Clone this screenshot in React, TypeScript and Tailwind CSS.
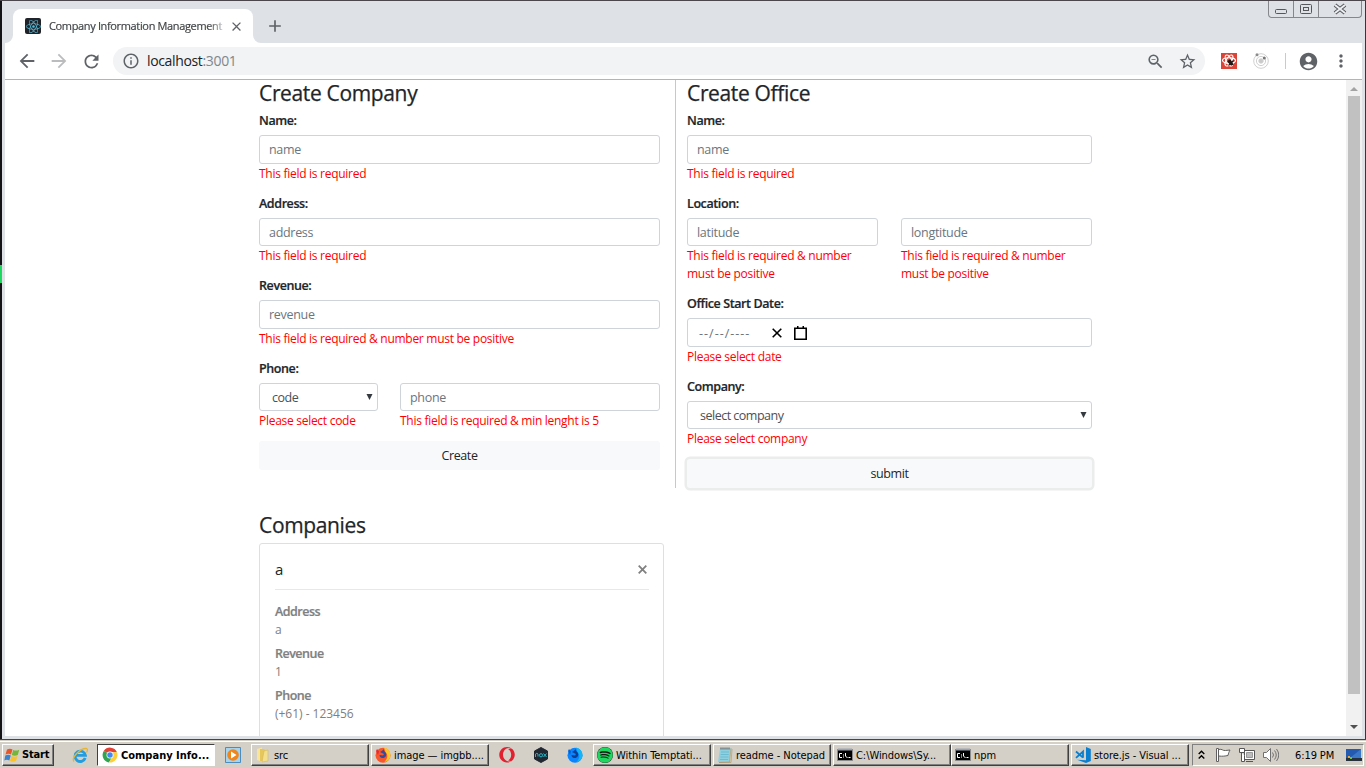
import { useState, type ReactNode } from "react";
import { FaOpera, FaReact, FaSpotify } from "react-icons/fa";
import {
  MdAccountCircle,
  MdAdd,
  MdArrowBack,
  MdArrowForward,
  MdClose,
  MdInfoOutline,
  MdMoreVert,
  MdRefresh,
  MdStarBorder,
  MdZoomOut,
} from "react-icons/md";

const controlClass =
  "block h-[28.5px] w-full rounded-[3px] border border-[#ced4da] bg-white text-[12.5px] text-[#495057] outline-none";
const inputClass = `${controlClass} px-[9px] pt-px tracking-[-0.3px] placeholder:text-[#6c757d] placeholder:opacity-100`;

export default function App() {
  return (
    <div className="flex h-[768px] w-[1366px] flex-col overflow-hidden bg-[#d4d0c8] font-['Open_Sans',sans-serif]">
      <div className="flex h-[740px] border-t border-b border-t-[#4a464b] border-b-[#47444a] bg-[#dee1e6]">
        <div className="w-[2px] bg-[#141416] pt-[264px]">
          <div className="h-[18px] bg-[#1ed760]" />
        </div>
        <div className="w-[3px]" />
        <div className="flex w-[1357px] flex-col">
          <TabStrip />
          <Toolbar />
          <div className="flex h-[656px] bg-white">
            <Page />
            <Scrollbar />
          </div>
        </div>
        <div className="w-[3px]" />
        <div className="w-px bg-[#38363b]" />
      </div>
      <Taskbar />
    </div>
  );
}

function TabStrip() {
  return (
    <div className="flex h-[42px] justify-between">
      <div className="flex pt-2">
        <TabCorner flip={false} />
        <div className="flex h-[34px] w-[240px] items-center rounded-t-lg bg-white pl-3">
          <div className="flex h-4 w-4 items-center justify-center rounded-[2px] bg-[#20232a]">
            <FaReact size={15} className="text-[#53b8d3]" />
          </div>
          <div className="ml-2 w-[173px] bg-linear-to-r from-[#3c4043] from-92% to-[#3c4043]/30 bg-clip-text text-[11px] tracking-[-0.35px] whitespace-nowrap text-transparent [-webkit-text-stroke:0.15px_#3c404380]">
            Company Information Management
          </div>
          <MdClose size={15} className="ml-[7px] text-[#5f6368]" />
        </div>
        <TabCorner flip />
        <MdAdd size={20} className="mt-[7px] ml-1 text-[#5f6368]" />
      </div>
      <div className="flex h-[17px] w-[94px] rounded-b-[4px] border border-t-0 border-[#85878c]">
        <WindowButton width={24}>
          <rect x="6.5" y="8.5" width="11" height="4" rx="1" />
        </WindowButton>
        <WindowButton width={24}>
          <rect x="6.5" y="3.5" width="11" height="9" rx="1" />
          <rect x="9.5" y="6.5" width="5" height="3" />
        </WindowButton>
        <svg width="42" height="16" viewBox="0 0 42 16" fill="none">
          <path d="M16 4l10 8M26 4l-10 8" stroke="#55575c" strokeWidth="4" />
          <path d="M16 4l10 8M26 4l-10 8" stroke="#eceef1" strokeWidth="2" />
        </svg>
      </div>
    </div>
  );
}

function TabCorner({ flip }: { flip: boolean }) {
  return (
    <svg width="8" height="34" className={flip ? "-scale-x-100" : ""}>
      <path d="M0 34A8 8 0 0 0 8 26V34Z" fill="white" />
    </svg>
  );
}

function WindowButton({ width, children }: { width: number; children: ReactNode }) {
  return (
    <svg width={width + 1} height="16" fill="none" stroke="#55575c">
      {children}
      <path d={`M${width + 0.5} 0v16`} stroke="#85878c" />
    </svg>
  );
}

function Toolbar() {
  return (
    <div className="flex h-[37px] items-center border-b border-[#b2b4b6] bg-white pl-1.5 text-[#5f6368]">
      <div className="flex w-8 justify-center">
        <MdArrowBack size={22} />
      </div>
      <div className="flex w-8 justify-center">
        <MdArrowForward size={22} className="text-[#babcbe]" />
      </div>
      <div className="flex w-8 justify-center">
        <MdRefresh size={21} />
      </div>
      <div className="ml-1.5 flex h-7 w-[1092px] items-center rounded-full bg-[#f1f3f4] pr-2 pl-[9px]">
        <MdInfoOutline size={18} />
        <div className="ml-[7px] flex-1 pb-0.5 text-[14px] tracking-[-0.35px] text-[#202124]">
          localhost<span className="text-[#80868b]">:3001</span>
        </div>
        <MdZoomOut size={19} className="mr-[13px]" />
        <MdStarBorder size={19} />
      </div>
      <div className="ml-4 flex h-4 w-4 items-center justify-center bg-[#db4437]">
        <svg width="16" height="16" fill="none" stroke="#fff" strokeWidth="1.1">
          <ellipse cx="8" cy="7.5" rx="6.5" ry="2.7" />
          <ellipse cx="8" cy="7.5" rx="6" ry="2.7" transform="rotate(60 8 7.5)" />
          <ellipse cx="8" cy="7.5" rx="6" ry="2.7" transform="rotate(120 8 7.5)" />
          <ellipse cx="9.5" cy="9.5" rx="1.8" ry="3.2" fill="#201814" stroke="none" transform="rotate(-35 9.5 9.5)" />
          <path d="M6.500 8.500l6 3.500M7.500 12.500l5-5" stroke="#201814" />
        </svg>
      </div>
      <svg width="16" height="16" className="ml-4" fill="none" stroke="#d0d0d0">
        <circle cx="8" cy="8" r="7.3" />
        <circle cx="8" cy="8" r="4.6" />
        <circle cx="8" cy="8" r="2.2" fill="#c9c9c9" />
        <circle cx="4" cy="1.8" r="1.5" fill="#8b8b8b" stroke="none" />
        <circle cx="11.3" cy="5" r="1.5" fill="#777" stroke="none" />
      </svg>
      <div className="ml-4 h-4 w-px bg-[#c8cacc]" />
      <MdAccountCircle size={21} className="ml-3" />
      <MdMoreVert size={20} className="ml-3" />
    </div>
  );
}

function Scrollbar() {
  return (
    <div className="flex w-4 flex-col items-center bg-[#f1f1f1]">
      <svg width="16" height="16">
        <path d="M4 11l4-4 4 4Z" fill="#a3a3a3" />
      </svg>
      <div className="h-[598px] w-3 bg-[#c1c1c1]" />
      <div className="flex-1" />
      <svg width="16" height="16">
        <path d="M4 5h8l-4 4Z" fill="#505050" />
      </svg>
    </div>
  );
}

function Page() {
  return (
    <main className="h-[656px] w-[1341px] overflow-hidden pl-[254px] text-[12.5px] leading-[18px] text-[#212529]">
      <div className="flex h-[408px]">
        <CreateCompany />
        <CreateOffice />
      </div>
      <div className="h-[55px] pt-6">
        <Heading>Companies</Heading>
      </div>
      <CompanyCard name="a" address="a" revenue="1" phone="(+61) - 123456" />
    </main>
  );
}

function Heading({ children }: { children: ReactNode }) {
  return (
    <h2 className="h-8 text-[21px] leading-[27px] font-medium tracking-[-0.35px] [-webkit-text-stroke:0.25px_#212529]">
      {children}
    </h2>
  );
}

function Field({ label, children }: { label: string; children: ReactNode }) {
  return (
    <div className="mb-3">
      <div className="mb-[5px] font-semibold tracking-[-0.4px] [-webkit-text-stroke:0.2px_#212529]">{label}</div>
      {children}
    </div>
  );
}

function FieldError({ children }: { children: ReactNode }) {
  return <div className="mt-px text-[12px] tracking-[-0.28px] text-[#ff0000]">{children}</div>;
}

function Select({ placeholder }: { placeholder: string }) {
  return (
    <div className="relative">
      <select className={`${controlClass} appearance-none pt-0.5 pl-3 leading-[24px] tracking-[-0.5px]`}>
        <option>{placeholder}</option>
      </select>
      <svg width="7" height="7" className="absolute top-[11px] right-[5px]">
        <path d="M.5 0h6L3.500 6Z" fill="#343a40" />
      </svg>
    </div>
  );
}

function CreateCompany() {
  return (
    <section className="w-[417px] border-r border-[#c8c8c8] pr-[15px]">
      <Heading>Create Company</Heading>
      <Field label="Name:">
        <input className={inputClass} placeholder="name" />
        <FieldError>This field is required</FieldError>
      </Field>
      <Field label="Address:">
        <input className={inputClass} placeholder="address" />
        <FieldError>This field is required</FieldError>
      </Field>
      <Field label="Revenue:">
        <input className={inputClass} placeholder="revenue" />
        <FieldError>This field is required &amp; number must be positive</FieldError>
      </Field>
      <Field label="Phone:">
        <div className="flex gap-[22px]">
          <div className="w-[119px]">
            <Select placeholder="code" />
            <FieldError>Please select code</FieldError>
          </div>
          <div className="flex-1">
            <input className={inputClass} placeholder="phone" />
            <FieldError>This field is required &amp; min lenght is 5</FieldError>
          </div>
        </div>
      </Field>
      <button className="-mt-px block h-[28.5px] w-full rounded-[3px] bg-[#f8f9fa] pt-0.5 text-center tracking-[-0.4px]">
        Create
      </button>
    </section>
  );
}

function CreateOffice() {
  return (
    <section className="w-[416px] pl-[11px]">
      <Heading>Create Office</Heading>
      <Field label="Name:">
        <input className={inputClass} placeholder="name" />
        <FieldError>This field is required</FieldError>
      </Field>
      <Field label="Location:">
        <div className="grid grid-cols-2 gap-[23px]">
          <div>
            <input className={inputClass} placeholder="latitude" />
            <FieldError>
              This field is required &amp; number
              <br />
              must be positive
            </FieldError>
          </div>
          <div>
            <input className={inputClass} placeholder="longtitude" />
            <FieldError>
              This field is required &amp; number
              <br />
              must be positive
            </FieldError>
          </div>
        </div>
      </Field>
      <Field label="Office Start Date:">
        <div className="flex h-[28.5px] items-center rounded-[3px] border border-[#ced4da] pt-px pl-[11px] text-[#6c757d]">
          <span className="w-[73px] pt-0.5 tracking-[1px]">--/--/----</span>
          <svg width="10" height="10" stroke="black" strokeWidth="1.6">
            <path d="M.7 .7l8.6 8.6M9.3 .7L.7 9.3" />
          </svg>
          <svg width="13" height="14" className="ml-3" fill="none">
            <path d="M.8 2.300h11.400v10.900H.8Z" stroke="black" strokeWidth="1.600" />
            <path d="M3 0h1.500v3H3ZM8.500 0H10v3H8.500Z" fill="black" />
          </svg>
        </div>
        <FieldError>Please select date</FieldError>
      </Field>
      <Field label="Company:">
        <Select placeholder="select company" />
        <FieldError>Please select company</FieldError>
      </Field>
      <button className="-mt-px block h-[28.5px] w-full rounded-[3px] bg-[#f8f9fa] pt-0.5 text-center tracking-[-0.4px] shadow-[0_0_0_2.5px_#ebecec]">
        submit
      </button>
    </section>
  );
}

type Company = { name: string; address: string; revenue: string; phone: string };

function CompanyCard({ name, address, revenue, phone }: Company) {
  const rows = [
    ["Address", address],
    ["Revenue", revenue],
    ["Phone", phone],
  ];
  return (
    <div className="h-[250px] w-[405px] rounded-[3px] border border-[#dfdfdf] pr-3.5 pl-[15px] text-[#808080]">
      <div className="flex h-[46px] items-center justify-between border-b border-[#e8e8e8] pt-[5px] pr-0.5">
        <span className="pb-px text-[15px] text-[#212529]">{name}</span>
        <svg width="9" height="9" stroke="#808080" strokeWidth="1.8">
          <path d="M.7 .7l7.6 7.6M8.3 .7L.7 8.3" />
        </svg>
      </div>
      <div className="pt-[13px]">
        {rows.map(([label, value]) => (
          <div key={label} className="mb-1.5">
            <div className="font-semibold tracking-[-0.5px] [-webkit-text-stroke:0.2px_#808080]">{label}</div>
            <div className="text-[12px] tracking-[-0.02px]">{value}</div>
          </div>
        ))}
      </div>
    </div>
  );
}

function Taskbar() {
  const [active] = useState("Company Info...");
  return (
    <div className="flex h-7 border-t border-[#d4d0c8] pl-0.5 font-['DejaVu_Sans_Condensed','DejaVu_Sans',sans-serif] text-[11px] text-black shadow-[inset_0_1px_0_#fff]">
      <div className="mt-[3px] flex h-[22px] w-[52px] items-center border border-t-white border-r-[#404040] border-b-[#404040] border-l-white pl-px font-bold tracking-[-0.15px] shadow-[inset_-1px_-1px_0_#808080]">
        <WindowsLogo />
        <span className="ml-0.5 pt-px">Start</span>
      </div>
      <div className="mt-1.5 ml-[18px]">
        <IeIcon />
      </div>
      <div className="w-[9px]" />
      <Task title={active} icon={<ChromeIcon />} active />
      <div className="mt-1.5 mr-2.5 ml-2.5">
        <PlayerIcon />
      </div>
      <Task title="src" icon={<FolderIcon />} />
      <div className="w-0.5" />
      <Task title="image — imgbb...." icon={<FirefoxIcon blue={false} />} />
      <div className="mt-1.5 mr-[18px] ml-2.5">
        <FaOpera size={16} className="text-[#e3202f]" />
      </div>
      <div className="mt-1.5">
        <NoxIcon />
      </div>
      <div className="mt-1.5 mr-2.5 ml-[18px]">
        <FirefoxIcon blue />
      </div>
      <Task title="Within Temptati..." icon={<SpotifyIcon />} />
      <div className="w-0.5" />
      <Task title="readme - Notepad" icon={<NotepadIcon />} />
      <div className="w-0.5" />
      <Task title="C:\Windows\Sy..." icon={<ConsoleIcon />} />
      <Task title="npm" icon={<ConsoleIcon />} />
      <div className="w-0.5" />
      <Task title="store.js - Visual ..." icon={<CodeIcon />} />
      <Tray />
    </div>
  );
}

function Task({ title, icon, active }: { title: string; icon: ReactNode; active?: boolean }) {
  const state = active
    ? "border-t-[#404040] border-l-[#404040] border-r-white border-b-white bg-white font-bold tracking-[0px] pl-1"
    : "border-t-white border-l-white border-r-[#404040] border-b-[#404040] tracking-[-0.06px] pl-[3px] shadow-[inset_-1px_-1px_0_#808080]";
  return (
    <div className={`mt-[3px] flex h-[22px] w-[118px] shrink-0 items-center border whitespace-nowrap ${state}`}>
      {icon}
      <span className="ml-[3px] pt-0.5">{title}</span>
    </div>
  );
}

function Tray() {
  return (
    <div className="mt-[3px] ml-[3px] flex h-[22px] w-[172px] items-center border border-t-[#808080] border-r-white border-b-white border-l-[#808080] pl-[5px]">
      <svg width="7" height="10" fill="none" stroke="black" strokeWidth="1.4">
        <path d="M.7 4L3.5 1.2 6.3 4M.7 8.5L3.5 5.7 6.3 8.5" />
      </svg>
      <svg width="16" height="16" className="ml-2.5" fill="white" stroke="#606060">
        <path d="M3.500 2.500c4-1 4 1.500 7 1l4.500-.5c-1 2-1.500 3-2 5.500-3 .5-5 1-9.500 .5Z" />
        <path d="M1.500 1.500h2v13h-2Z" />
      </svg>
      <svg width="16" height="16" className="ml-2" fill="white" stroke="#555">
        <path d="M5.500 3.500h10v9h-10Z" />
        <path d="M7.500 5.500h6v5h-6Z" fill="#bdbdbd" stroke="#999" />
        <path d="M.5 1.500h5v4h-5ZM2.500 5.500v9h3v-6M7 14.500h7" />
      </svg>
      <svg width="16" height="16" className="ml-2" fill="none" stroke="#707070">
        <path d="M.5 5.500h3l4-4v13l-4-4h-3Z" fill="white" />
        <path d="M9.500 5.500q2 2.500 0 5M11.500 3.500q3.500 4.500 0 9M13.500 2q4.500 6 0 12" />
      </svg>
      <span className="ml-4 w-[50px] pt-0.5 tracking-[-0.1px] whitespace-nowrap">6:19 PM</span>
      <svg width="16" height="14" className="ml-px">
        <path d="M0 1h15v11H0Z" fill="#3c78c8" />
        <path d="M0 1h15L4 10H0Z" fill="#245bb0" />
        <path d="M0 10h16v3H0Z" fill="#27313d" />
        <path d="M2 8h2v2H2Z" fill="#f3a530" />
        <path d="M4 9h2v2H4Z" fill="#72c43d" />
      </svg>
    </div>
  );
}

function WindowsLogo() {
  return (
    <svg width="16" height="16">
      <path d="M3 2.500q3-1.500 5.500 0L7 7.500q-2.500-1.500-5.500 0Z" fill="#e8572a" />
      <path d="M9.200 3q2.800 1.300 6-.3L13.800 8q-3 1.300-6 0Z" fill="#75b63a" />
      <path d="M1.300 8.500q3-1.500 5.500 0L5.300 13.500q-2.500-1.500-5 0Z" fill="#3c83cf" />
      <path d="M7.500 9q2.800 1.300 6 0L12 14q-3 1.300-6 0Z" fill="#f8c32c" />
    </svg>
  );
}

function IeIcon() {
  return (
    <svg width="16" height="16" fill="none">
      <path d="M13.200 11A5.200 5.200 0 1 1 13.400 8.300H4" stroke="#249ce0" strokeWidth="2.800" />
      <path d="M2 14.500C-1 11 8 1 14.500 1.500 16 2 15.500 4 14.500 5.500" stroke="#e9b52f" strokeWidth="1.300" />
    </svg>
  );
}

function ChromeIcon() {
  return (
    <svg width="16" height="16" viewBox="-0.5 -0.5 17 17">
      <path d="M8 8L1.500 3.500A8 8 0 0 1 15.400 5H8Z" fill="#e34133" />
      <path d="M8 8L1.500 3.500A8 8 0 0 0 6.900 15.900L10.600 9.500Z" fill="#30a450" />
      <path d="M8 8L10.600 9.500 6.900 15.900A8 8 0 0 0 15.400 5H8Z" fill="#fdd03b" />
      <circle cx="8" cy="8" r="3.700" fill="white" />
      <circle cx="8" cy="8" r="2.900" fill="#4587ef" />
    </svg>
  );
}

function PlayerIcon() {
  return (
    <svg width="16" height="16">
      <path d="M.5 .5h15v15H.5Z" fill="#a6d3ee" stroke="#4b8dbf" />
      <circle cx="8" cy="8" r="5.800" fill="#f0851c" />
      <path d="M6 4.500L11.500 8 6 11.500Z" fill="white" />
    </svg>
  );
}

function FolderIcon() {
  return (
    <svg width="16" height="16">
      <path d="M2 2l5-1.500v14L2 13Z" fill="#f8e59a" />
      <path d="M5 2h4l1 1v11H5Z" fill="#e5c75e" />
      <path d="M9 4l4-1v11l-6 1Z" fill="#f3df8c" stroke="#d6b955" strokeWidth=".6" />
    </svg>
  );
}

function FirefoxIcon({ blue }: { blue: boolean }) {
  return (
    <svg width="16" height="16">
      <circle cx="8" cy="8.300" r="7.500" fill={blue ? "#0a84ff" : "#f9572b"} />
      <path d="M9 .5c4 1 7 4 6.500 8.500-.5 3-3 5.500-6 6 3-3 4-7 1-10Z" fill={blue ? "#12b5f5" : "#ffc928"} />
      <path d="M5 5c2-1 3-2 4-3-.5 2 .5 2 1.500 3.500 2 3-.5 6-3.500 5.500C5 10.500 4.500 9 4.500 8L8 8.500 9 7Z" fill={blue ? "#0a3f91" : "#3b4a96"} />
      <path d="M1 4l1-2 2 2.500L3 8Z" fill={blue ? "#0560ce" : "#e5263c"} />
    </svg>
  );
}

function NoxIcon() {
  return (
    <svg width="16" height="16" fill="none" stroke="#25b7c8" strokeWidth="1">
      <path d="M8 .5l6.500 3.500v8L8 15.500 1.500 12V4Z" fill="#222831" stroke="#222831" />
      <path d="M2.500 10V7q1.500-1.500 2.500 0v2.500M10.500 6.500l3 3.500M13.500 6.500l-3 3.500" />
      <circle cx="8" cy="8.300" r="1.600" />
    </svg>
  );
}

function SpotifyIcon() {
  return (
    <div className="rounded-full bg-[#191414]">
      <FaSpotify size={16} className="text-[#1ed760]" />
    </div>
  );
}

function NotepadIcon() {
  return (
    <svg width="16" height="16">
      <path d="M3 1.500h11L12.500 15H1Z" fill="#8fd0df" />
      <path d="M14 1.500l1 1L14 15.500H2L12.500 15Z" fill="#d8d1b8" stroke="#a08a5a" strokeWidth=".5" />
      <path d="M4 5h8M3.700 7.500h8M3.400 10h8M3 12.500h8" stroke="#5fb1c9" strokeWidth=".7" />
      <path d="M3.500 1.500h10" stroke="#555" strokeWidth="2" strokeDasharray="1 1" />
    </svg>
  );
}

function ConsoleIcon() {
  return (
    <svg width="16" height="16">
      <path d="M.5 2.500h15v11H.5Z" fill="black" stroke="#8a8a8a" />
      <path d="M1 2.500h14" stroke="#9aa3b0" strokeWidth="2" />
      <path d="M5 6.500H2.500v4H5M6.500 7.500v1M6.500 9.500v1M8.500 6v3l2 2M11.500 10.500h2" fill="none" stroke="white" />
    </svg>
  );
}

function CodeIcon() {
  return (
    <svg width="16" height="16" fill="none" stroke="#0a7fd0" strokeWidth="1.800">
      <path d="M11 0L15.800 2v12L11 16 2 12.800l9 .4Z" fill="#0a7fd0" stroke="none" />
      <path d="M1 4.500l7 6.200M1 10.800l7-6.300v6.200" />
    </svg>
  );
}
